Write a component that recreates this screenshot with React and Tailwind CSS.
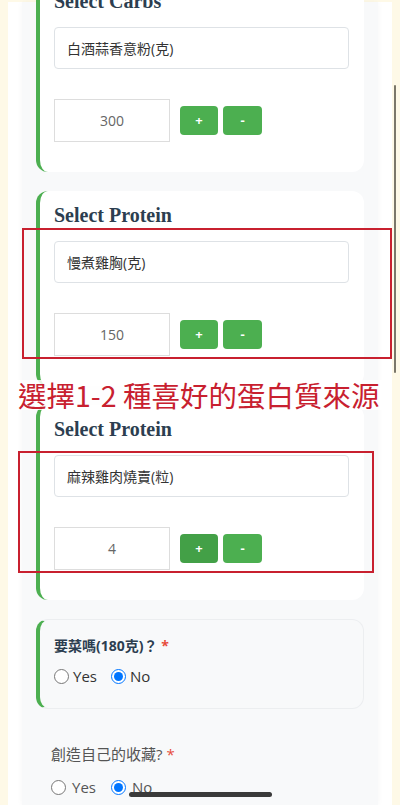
import React from "react";

const SANS = "font-['Open_Sans','Noto_Sans_CJK_TC',sans-serif]";

function Stepper({ value, pressed }) {
  return (
    <div className="mt-[30px] flex items-center">
      <div className="flex h-[43px] w-[116px] items-center justify-center border border-[#dddddd] bg-white text-[14px] text-[#666]">
        {value}
      </div>
      <button
        type="button"
        className={`ml-[10px] flex h-[29px] w-[38px] items-center justify-center rounded-[4px] text-[13px] font-bold text-white ${
          pressed ? "bg-[#43a047]" : "bg-[#4caf50]"
        }`}
      >
        +
      </button>
      <button
        type="button"
        className="ml-[5px] flex h-[29px] w-[39px] items-center justify-center rounded-[4px] bg-[#4caf50] text-[13px] font-bold text-white"
      >
        -
      </button>
    </div>
  );
}

function PickCard({ title, item, value, pressed, className = "" }) {
  return (
    <div
      className={`rounded-xl border-l-4 border-[#4caf50] bg-white pl-[14px] pr-[15px] pt-[12px] pb-[30px] ${className}`}
    >
      <h3 className="font-['Liberation_Serif',serif] text-[20px] font-bold leading-[24px] text-[#2c3e50]">
        {title}
      </h3>
      <div className="mt-[14px] flex h-[42px] items-center rounded-[4px] border border-[#dee2e6] bg-white px-[12px] text-[14px] text-[#333]">
        {item}
      </div>
      <Stepper value={value} pressed={pressed} />
    </div>
  );
}

function Radio({ label, checked, gap = "gap-[4px]" }) {
  return (
    <label className={`flex items-center ${gap}`}>
      <input
        type="radio"
        defaultChecked={checked}
        className="m-0 h-[15px] w-[15px] accent-[#0075ff]"
      />
      <span>{label}</span>
    </label>
  );
}

export default function App() {
  return (
    <div className={`relative h-[805px] w-[400px] overflow-hidden bg-[#fef9e7] ${SANS}`}>
      <div className="mx-[8px] mt-[2px] flex h-[803px] flex-col bg-white px-[14px]">
        <div className="flex h-full flex-col bg-[#f8f9fa] px-[14px] shadow-[0_0_6px_rgba(0,0,0,0.04)]">
          <div className="-mt-[25px] flex flex-col gap-[19px]">
            <PickCard title="Select Carbs" item="白酒蒜香意粉(克)" value="300" />
            <PickCard title="Select Protein" item="慢煮雞胸(克)" value="150" />
            <PickCard title="Select Protein" item="麻辣雞肉燒賣(粒)" value="4" pressed />
          </div>

          <div className="mt-[19px] rounded-xl border border-l-4 border-[#eceef0] border-l-[#4caf50] bg-[#f8f9fa] pl-[14px] pt-[16px] pb-[22px]">
            <p className="text-[14px] font-bold leading-[20px] text-[#2c3e50]">
              要菜嗎(180克)？ <span className="text-[#e74c3c]">*</span>
            </p>
            <div className="mt-[10px] flex h-[20px] items-center gap-[14px] text-[15px] text-[#333]">
              <Radio label="Yes" />
              <Radio label="No" checked />
            </div>
          </div>

          <div className="px-[15px] pt-[34px]">
            <p className="text-[15px] leading-[22px] text-[#555]">
              創造自己的收藏? <span className="text-[#e74c3c]">*</span>
            </p>
            <div className="mt-[11px] flex h-[22px] items-center gap-[15px] text-[15px] text-[#555]">
              <Radio label="Yes" gap="gap-[6px]" />
              <Radio label="No" checked gap="gap-[6px]" />
            </div>
          </div>
        </div>
      </div>

      {/* annotation overlays */}
      <div className="pointer-events-none absolute left-[22px] top-[228px] h-[131px] w-[370px] border-2 border-[#c8202f]" />
      <div className="pointer-events-none absolute left-[18px] top-[451px] h-[122px] w-[356px] border-2 border-[#c8202f]" />
      <div className="pointer-events-none absolute left-[10px] top-[380px] flex h-[30px] w-[376px] items-center bg-white/85 pl-[8px]">
        <span className="font-['Noto_Sans_CJK_TC',sans-serif] text-[28.5px] font-normal leading-none text-[#c8202f]">
          選擇1-2 種喜好的蛋白質來源
        </span>
      </div>

      <div className="absolute left-[394px] top-[85px] h-[288px] w-[2px] rounded-full bg-[#7b776a]" />
      <div className="absolute left-[129px] top-[792px] h-[5px] w-[143px] rounded-full bg-[#3a3a3a]" />
    </div>
  );
}
